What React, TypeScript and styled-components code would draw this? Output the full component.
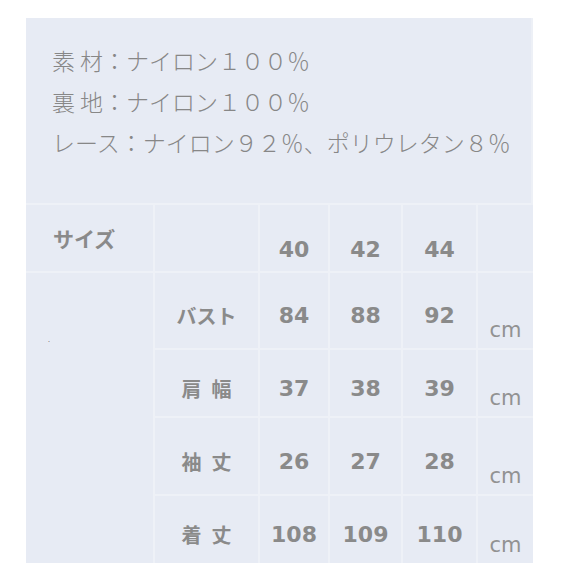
import React from 'react';
import styled, { createGlobalStyle } from 'styled-components';

const GlobalStyle = createGlobalStyle`
  body {
    margin: 0;
    background: #ffffff;
  }
`;

const LINES = [
  '素 材：ナイロン１００％',
  '裏 地：ナイロン１００％',
  'レース：ナイロン９２％、ポリウレタン８％',
];

const SIZES = ['40', '42', '44'];

const ROWS = [
  { label: 'バスト', values: ['84', '88', '92'] },
  { label: '肩\u2002幅', values: ['37', '38', '39'] },
  { label: '袖\u2002丈', values: ['26', '27', '28'] },
  { label: '着\u2002丈', values: ['108', '109', '110'] },
];

function App() {
  return (
    <>
      <GlobalStyle />
      <StyledRoot>
        <Panel>
          <Materials>
            {LINES.map((line) => (
              <MaterialLine key={line}>{line}</MaterialLine>
            ))}
          </Materials>
          <SizeTable>
            <HeadCell>サイズ</HeadCell>
            <Cell />
            {SIZES.map((s) => (
              <SizeCell key={s}>{s}</SizeCell>
            ))}
            <Cell />
            <SpanCell>
              <Dot>.</Dot>
            </SpanCell>
            {ROWS.map((row) => (
              <React.Fragment key={row.label}>
                <LabelCell>{row.label}</LabelCell>
                {row.values.map((v) => (
                  <ValueCell key={v}>{v}</ValueCell>
                ))}
                <UnitCell>cm</UnitCell>
              </React.Fragment>
            ))}
          </SizeTable>
        </Panel>
      </StyledRoot>
    </>
  );
}

const StyledRoot = styled.div`
  width: 580px;
  height: 580px;
  padding: 18px 0 0 26px;
  box-sizing: border-box;
`;

const Panel = styled.div`
  width: 507px;
  height: 545px;
  background: #e7ebf4;
  display: flex;
  flex-direction: column;
  border-right: 2px solid #edf0f6;
  box-sizing: border-box;
`;

const Materials = styled.div`
  height: 185px;
  padding: 22px 0 0 26px;
  box-sizing: border-box;
  color: #878787;
  font-family: "Noto Sans CJK JP", sans-serif;
  font-weight: 300;
  font-size: 23px;
  line-height: 41px;
`;

const MaterialLine = styled.div`
  white-space: pre;
`;

const SizeTable = styled.div`
  flex: 1;
  display: grid;
  grid-template-columns: 127px 103px 68px 71px 73px 55px;
  grid-template-rows: 66px 75px 66px 76px 1fr;
  gap: 2px;
  background: #eef1f7;
  border-top: 2px solid #eef1f7;
`;

const Cell = styled.div`
  background: #e7ebf4;
  display: flex;
  align-items: center;
  justify-content: center;
  color: #8a8a8a;
`;

const HeadCell = styled(Cell)`
  justify-content: flex-start;
  padding: 0 0 0 27px;
  font-family: "Noto Sans CJK JP", sans-serif;
  font-weight: 700;
  font-size: 21px;
`;

const SpanCell = styled(Cell)`
  grid-row: span 4;
  align-items: flex-start;
  justify-content: flex-start;
  padding: 62px 0 0 22px;
`;

const Dot = styled.span`
  font-size: 8px;
  color: #555;
`;

const SizeCell = styled(Cell)`
  padding-top: 22px;
  font-family: "DejaVu Sans", Verdana, sans-serif;
  font-weight: 700;
  font-size: 22px;
`;

const LabelCell = styled(Cell)`
  padding-top: 10px;
  font-family: "Noto Sans CJK JP", sans-serif;
  font-weight: 700;
  font-size: 20px;
  white-space: pre;
`;

const ValueCell = styled(Cell)`
  padding-top: 10px;
  font-family: "DejaVu Sans", Verdana, sans-serif;
  font-weight: 700;
  font-size: 22px;
`;

const UnitCell = styled(Cell)`
  align-items: flex-end;
  padding-bottom: 6px;
  font-family: "DejaVu Sans", Verdana, sans-serif;
  font-size: 21px;
  color: #929292;
`;

export default App;
